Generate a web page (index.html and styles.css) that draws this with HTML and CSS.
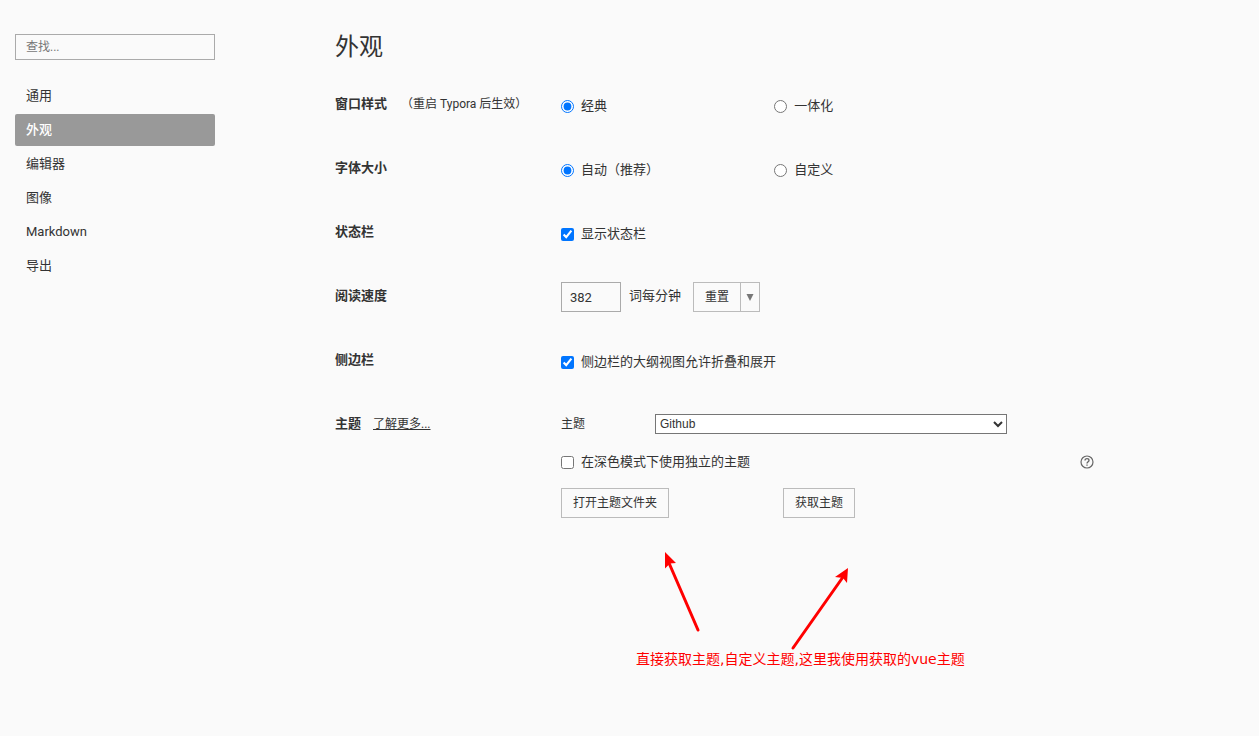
FILE: index.html
```html
<!DOCTYPE html>
<html lang="zh-CN">
<head>
<meta charset="utf-8">
<meta name="viewport" content="width=device-width, initial-scale=1">
<title>外观</title>
<link rel="stylesheet" href="styles.css">
</head>
<body>
<div class="app">
  <aside class="sidebar">
    <input class="search" type="text" placeholder="查找..." aria-label="查找">
    <nav class="nav">
      <a class="nav-item" href="#general">通用</a>
      <a class="nav-item active" href="#appearance" aria-current="page">外观</a>
      <a class="nav-item" href="#editor">编辑器</a>
      <a class="nav-item" href="#image">图像</a>
      <a class="nav-item" href="#markdown">Markdown</a>
      <a class="nav-item" href="#export">导出</a>
    </nav>
  </aside>
  <main class="main">
    <h1 class="title">外观</h1>
    <section class="row">
      <div class="row-label"><h2 class="name">窗口样式</h2><span class="note">（重启 Typora 后生效）</span></div>
      <div class="control choices">
        <label class="option"><input class="tick" type="radio" name="window" checked>经典</label>
        <label class="option"><input class="tick" type="radio" name="window">一体化</label>
      </div>
    </section>
    <section class="row">
      <div class="row-label"><h2 class="name">字体大小</h2></div>
      <div class="control choices">
        <label class="option"><input class="tick" type="radio" name="size" checked>自动（推荐）</label>
        <label class="option"><input class="tick" type="radio" name="size">自定义</label>
      </div>
    </section>
    <section class="row">
      <div class="row-label"><h2 class="name">状态栏</h2></div>
      <div class="control">
        <label class="option"><input class="tick" type="checkbox" checked>显示状态栏</label>
      </div>
    </section>
    <section class="row">
      <div class="row-label"><h2 class="name">阅读速度</h2></div>
      <div class="control speed">
        <input class="number" id="speed" type="text" value="382">
        <label class="unit" for="speed">词每分钟</label>
        <div class="split">
          <button class="button" type="button">重置</button>
          <button class="button caret" type="button" aria-label="更多"><svg width="8" height="7" viewBox="0 0 8 7"><path d="M.5 0h7L4 7z" fill="#777"/></svg></button>
        </div>
      </div>
    </section>
    <section class="row">
      <div class="row-label"><h2 class="name">侧边栏</h2></div>
      <div class="control">
        <label class="option"><input class="tick" type="checkbox" checked>侧边栏的大纲视图允许折叠和展开</label>
      </div>
    </section>
    <section class="row">
      <div class="row-label"><h2 class="name">主题</h2><a class="more" href="#more">了解更多...</a></div>
      <div class="theme">
        <div class="theme-pick">
          <label class="theme-label" for="theme">主题</label>
          <select class="select" id="theme"><option>Github</option></select>
        </div>
        <div class="dark">
          <label class="option"><input class="tick" type="checkbox">在深色模式下使用独立的主题</label>
          <svg class="help" width="14" height="14" viewBox="0 0 14 14" fill="none" stroke="#666"><circle cx="7" cy="7" r="6" stroke-width="1.2"/><path d="M5 5.6C5 4.4 5.9 3.7 7 3.7s2 .7 2 1.7C9 6.700 7 6.800 7 8.500" stroke-width="1.3"/><path d="M7 9.400v1.300" stroke-width="1.3"/></svg>
        </div>
        <div class="theme-actions">
          <div><button class="button" type="button">打开主题文件夹</button></div>
          <div><button class="button" type="button">获取主题</button></div>
        </div>
      </div>
    </section>
  </main>
  <div class="annotation">
    <svg class="arrows" width="335" height="100" viewBox="0 0 335 100" fill="red" stroke="red">
      <path d="M62 78L33 11" stroke-width="3" stroke-linecap="round"/>
      <path d="M29 0l11 11-6 .5-5 5z" stroke="none"/>
      <path d="M157 96L207 25" stroke-width="3" stroke-linecap="round"/>
      <path d="M212 16l-1 15-4-5-8-1z" stroke="none"/>
    </svg>
    <p class="annotation-text">直接获取主题,自定义主题,这里我使用获取的vue主题</p>
  </div>
</div>
</body>
</html>
```
FILE: styles.css
```css
* {
  box-sizing: border-box;
}

body {
  margin: 0;
  background: #fafafa;
  color: #333;
  font: 13px/32px Roboto, "Noto Sans CJK SC", sans-serif;
}

input, button, select {
  font: inherit;
  color: inherit;
}

.app {
  position: relative;
  display: flex;
  gap: 120px;
  min-height: 100vh;
  padding: 30px 165px 30px 15px;
}

.sidebar {
  flex: 0 0 200px;
  padding-top: 4px;
}

.search {
  display: block;
  width: 100%;
  height: 26px;
  padding: 0 10px;
  border: 1px solid #aaa;
  background: transparent;
  font-size: 12px;
}

.search::placeholder {
  color: #777;
}

.nav {
  display: flex;
  flex-direction: column;
  gap: 2px;
  margin-top: 20px;
}

.nav-item {
  padding: 0 11px;
  border-radius: 2px;
  color: inherit;
  text-decoration: none;
}

.nav-item.active {
  background: #999;
  color: #fff;
  font-weight: 500;
}

.main {
  flex: 1;
  min-width: 0;
}

.title {
  margin: 0 0 24px;
  font-size: 24px;
  font-weight: 400;
  line-height: 34px;
}

.row {
  display: grid;
  grid-template-columns: 226px 1fr;
  min-height: 64px;
}

.row-label {
  display: flex;
  align-items: flex-start;
  white-space: nowrap;
}

.name {
  margin: 0;
  font-size: 13px;
  font-weight: 700;
}

.note {
  margin-left: 14px;
  font-size: 12px;
}

.more {
  margin-left: 12px;
  color: inherit;
  font-size: 12px;
}

.control {
  padding-top: 2px;
}

.choices {
  display: grid;
  grid-template-columns: 2fr 3fr;
  align-items: start;
}

.option {
  display: flex;
  align-items: center;
}

.tick {
  width: 13px;
  height: 13px;
  margin: 0 7px 0 0;
}

.speed {
  display: flex;
  align-items: flex-start;
  line-height: 28px;
}

.number {
  width: 60px;
  height: 30px;
  padding: 0 8px;
  border: 1px solid #aaa;
  background: transparent;
}

.unit {
  margin: 0 12px 0 8px;
}

.split {
  display: flex;
}

.button {
  height: 30px;
  padding: 0 11px;
  border: 1px solid #bbb;
  background: transparent;
  font-size: 12px;
  line-height: 28px;
}

.split .caret {
  display: flex;
  align-items: center;
  margin-left: -1px;
  padding: 0 5px;
}

.theme-pick {
  display: flex;
  align-items: center;
  font-size: 12px;
}

.theme-label {
  width: 94px;
}

.select {
  width: 66%;
  height: 20px;
  border: 1px solid #767676;
  border-radius: 0;
  background: #fff;
  font: 12px "Liberation Sans", "Noto Sans CJK SC", sans-serif;
}

.dark {
  display: flex;
  align-items: center;
  justify-content: space-between;
  margin: 6px 0 10px;
}

.theme-actions {
  display: grid;
  grid-template-columns: 5fr 7fr;
  line-height: 30px;
}

.annotation {
  position: absolute;
  top: 552px;
  left: 636px;
  color: red;
  font: 14px/20px "DejaVu Sans", "Noto Sans CJK SC", sans-serif;
  white-space: nowrap;
}

.arrows {
  display: block;
}

.annotation-text {
  margin: -3px 0 0;
}
```
